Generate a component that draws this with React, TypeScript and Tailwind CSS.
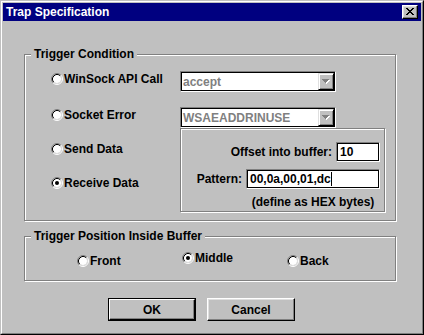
import React from "react";

function Radio({ checked }: { checked?: boolean }) {
  return (
    <svg width="12" height="12" viewBox="0 0 12 12" className="shrink-0">
      <path d="M2.11 9.89 A5.5 5.5 0 0 1 9.89 2.11" stroke="#808080" fill="none" />
      <path d="M9.89 2.11 A5.5 5.5 0 0 1 2.11 9.89" stroke="#ffffff" fill="none" />
      <circle cx="6" cy="6" r="4" fill="#ffffff" />
      <path d="M2.82 9.18 A4.5 4.5 0 0 1 9.18 2.82" stroke="#000000" fill="none" />
      <path d="M9.18 2.82 A4.5 4.5 0 0 1 2.82 9.18" stroke="#dfdfdf" fill="none" />
      {checked && <circle cx="6" cy="6" r="2" fill="#000000" />}
    </svg>
  );
}

function RadioLabel({ label, checked, className }: { label: string; checked?: boolean; className?: string }) {
  return (
    <div className={"flex items-center gap-[1px] h-[16px] " + (className ?? "")}>
      <Radio checked={checked} />
      <span className="whitespace-nowrap">{label}</span>
    </div>
  );
}

function GroupBox({ label, className, children }: { label: string; className?: string; children?: React.ReactNode }) {
  return (
    <div className={"relative border border-[#808080] shadow-[1px_1px_0_#ffffff,inset_1px_1px_0_#ffffff] " + (className ?? "")}>
      <span className="absolute top-[-8px] left-[6px] bg-[#c0c0c0] px-[3px] leading-[14px] whitespace-nowrap">{label}</span>
      {children}
    </div>
  );
}

function DownArrow() {
  return (
    <svg width="8" height="5" viewBox="0 0 8 5" shapeRendering="crispEdges">
      <rect x="1" y="1" width="7" height="1" fill="#ffffff" />
      <rect x="2" y="2" width="5" height="1" fill="#ffffff" />
      <rect x="3" y="3" width="3" height="1" fill="#ffffff" />
      <rect x="4" y="4" width="1" height="1" fill="#ffffff" />
      <rect x="0" y="0" width="7" height="1" fill="#808080" />
      <rect x="1" y="1" width="5" height="1" fill="#808080" />
      <rect x="2" y="2" width="3" height="1" fill="#808080" />
      <rect x="3" y="3" width="1" height="1" fill="#808080" />
    </svg>
  );
}

function Combo({ value }: { value: string }) {
  return (
    <div className="w-[156px] h-[21px] border border-t-[#808080] border-l-[#808080] border-r-white border-b-white">
      <div className="h-full flex bg-white border border-black">
        <div className="flex-1 flex items-center pl-[1px] text-[#808080] leading-[16px]">{value}</div>
        <div className="w-[16px] h-full bg-[#c0c0c0] border border-t-[#dfdfdf] border-l-[#dfdfdf] border-r-black border-b-black shadow-[inset_1px_1px_0_#ffffff,inset_-1px_-1px_0_#808080] flex items-center justify-center">
          <DownArrow />
        </div>
      </div>
    </div>
  );
}

function TextInput({ value, className, caret }: { value: string; className?: string; caret?: boolean }) {
  return (
    <div className={"h-[20px] border border-t-[#808080] border-l-[#808080] border-r-white border-b-white " + (className ?? "")}>
      <div className="h-full bg-white border border-black flex items-center pl-[2px] leading-[16px]">
        <span>{value}</span>
        {caret && <span className="inline-block w-[1px] h-[14px] bg-black" />}
      </div>
    </div>
  );
}

function CloseIcon() {
  return (
    <svg width="8" height="7" viewBox="0 0 8 7" shapeRendering="crispEdges">
      <rect x="0" y="0" width="2" height="1" fill="#000" />
      <rect x="6" y="0" width="2" height="1" fill="#000" />
      <rect x="1" y="1" width="2" height="1" fill="#000" />
      <rect x="5" y="1" width="2" height="1" fill="#000" />
      <rect x="2" y="2" width="4" height="1" fill="#000" />
      <rect x="3" y="3" width="2" height="1" fill="#000" />
      <rect x="2" y="4" width="4" height="1" fill="#000" />
      <rect x="1" y="5" width="2" height="1" fill="#000" />
      <rect x="5" y="5" width="2" height="1" fill="#000" />
      <rect x="0" y="6" width="2" height="1" fill="#000" />
      <rect x="6" y="6" width="2" height="1" fill="#000" />
    </svg>
  );
}

export default function App() {
  return (
    <div className="w-[424px] h-[335px] bg-[#c0c0c0] font-['Liberation_Sans',Arial,sans-serif] text-[12px] leading-[16px] font-bold text-black border border-t-[#c0c0c0] border-l-[#c0c0c0] border-r-black border-b-black">
      <div className="h-full w-full border border-t-white border-l-white border-r-[#808080] border-b-[#808080] p-px flex flex-col">
        {/* Title bar */}
        <div className="h-[18px] shrink-0 bg-[#000080] flex items-center justify-between pl-[3px] pr-[3px]">
          <span className="text-white whitespace-nowrap">Trap Specification</span>
          <div className="w-[16px] h-[14px] bg-[#c0c0c0] border border-t-white border-l-white border-r-black border-b-black shadow-[inset_-1px_-1px_0_#808080,inset_1px_1px_0_#dfdfdf] pl-[3px] pt-[2px]">
            <CloseIcon />
          </div>
        </div>

        {/* Client area */}
        <div className="flex flex-col pl-[21px]">
          <GroupBox label="Trigger Condition" className="mt-[33px] w-[372px] h-[167px]">
            <div className="flex flex-col pt-[16px] pl-[26px]">
              <div className="flex items-start h-[21px]">
                <div className="w-[129px]">
                  <RadioLabel label="WinSock API Call" />
                </div>
                <Combo value="accept" />
              </div>
              <div className="flex items-start h-[21px] mt-[15px]">
                <div className="w-[129px]">
                  <RadioLabel label="Socket Error" />
                </div>
                <Combo value="WSAEADDRINUSE" />
              </div>
              <div className="flex items-start">
                <div className="w-[129px] flex flex-col pt-[13px] gap-[18px]">
                  <RadioLabel label="Send Data" />
                  <RadioLabel label="Receive Data" checked />
                </div>
                <div className="w-[205px] h-[84px] border border-[#808080] shadow-[1px_1px_0_#ffffff,inset_1px_1px_0_#ffffff] flex flex-col pt-[13px] pr-[4px]">
                  <div className="flex items-center justify-end gap-[4px]">
                    <span className="whitespace-nowrap">Offset into buffer:</span>
                    <TextInput value="10" className="w-[44px]" />
                  </div>
                  <div className="flex items-center justify-end gap-[4px] mt-[7px]">
                    <span className="whitespace-nowrap">Pattern:</span>
                    <TextInput value="00,0a,00,01,dc" className="w-[134px]" caret />
                  </div>
                  <div className="flex justify-end mt-[5px]">
                    <span className="w-[134px] text-center whitespace-nowrap">(define as HEX bytes)</span>
                  </div>
                </div>
              </div>
            </div>
          </GroupBox>

          <GroupBox label="Trigger Position Inside Buffer" className="mt-[15px] w-[372px] h-[45px]">
            <div className="flex items-start pt-[13px] pl-[52px]">
              <div className="w-[105px]">
                <RadioLabel label="Front" className="mt-[3px]" />
              </div>
              <div className="w-[105px]">
                <RadioLabel label="Middle" checked />
              </div>
              <div className="w-[105px]">
                <RadioLabel label="Back" className="mt-[3px]" />
              </div>
            </div>
          </GroupBox>

          <div className="flex mt-[17px] ml-[84px] gap-[11px]">
            <div className="w-[88px] h-[23px] border border-black">
              <div className="h-full border border-t-white border-l-white border-r-black border-b-black shadow-[inset_-1px_-1px_0_#808080] flex items-center justify-center">
                OK
              </div>
            </div>
            <div className="w-[88px] h-[23px] border border-t-white border-l-white border-r-black border-b-black shadow-[inset_-1px_-1px_0_#808080,inset_1px_1px_0_#dfdfdf] flex items-center justify-center">
              Cancel
            </div>
          </div>
        </div>
      </div>
    </div>
  );
}
